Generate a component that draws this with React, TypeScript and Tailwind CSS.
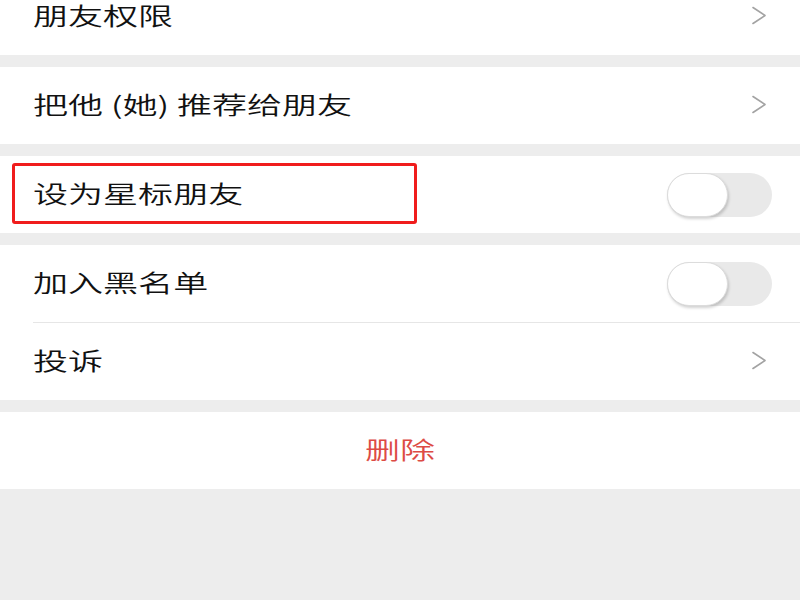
import { ReactNode } from "react";

const font = {
  fontFamily: '"Noto Sans CJK SC", "Noto Sans", sans-serif',
};

function Label({ children }: { children: ReactNode }) {
  return (
    <span className="inline-block origin-left scale-x-[1.46] text-[24px] font-[350] leading-none text-[#111] pb-[3px]">
      {children}
    </span>
  );
}

function Chevron() {
  return (
    <svg width="16" height="19" viewBox="0 0 16 19" fill="none" className="mr-[33px] mb-[2px]">
      <path d="M2 1.5 L14 9.5 L2 17.5" stroke="#a3a3a3" strokeWidth="1.6" strokeLinecap="round" strokeLinejoin="round" />
    </svg>
  );
}

function Toggle() {
  return (
    <div className="mr-[28px] h-[44px] w-[105px] rounded-full bg-[#e9e9e9] flex items-center">
      <div className="h-[44px] w-[61px] rounded-full bg-white border border-[#dcdcdc] shadow-[1px_2px_3px_rgba(0,0,0,0.18)]" />
    </div>
  );
}

function Row({ label, right }: { label: ReactNode; right?: ReactNode }) {
  return (
    <div className="relative h-[77px] bg-white flex items-center justify-between pl-[33px]">
      <Label>{label}</Label>
      {right}
    </div>
  );
}

export default function App() {
  return (
    <div className="w-[800px] h-[600px] overflow-hidden bg-[#ededed]" style={font}>
      <div className="-mt-[22px] flex flex-col gap-[12px]">
        <Row label="朋友权限" right={<Chevron />} />
        <Row label="把他 (她) 推荐给朋友" right={<Chevron />} />
        <div className="relative">
          <Row label="设为星标朋友" right={<Toggle />} />
          <div className="absolute left-[12px] top-[7px] w-[405px] h-[61px] border-[3px] border-[#f01c1c] rounded-[3px]" />
        </div>
        <div className="bg-white">
          <Row label="加入黑名单" right={<Toggle />} />
          <div className="ml-[33px] h-px bg-[#e6e6e6]" />
          <Row label="投诉" right={<Chevron />} />
        </div>
        <div className="h-[77px] bg-white flex items-center justify-center">
          <span className="inline-block scale-x-[1.46] text-[24px] font-[350] leading-none text-[#dd4b45] pb-[3px]">删除</span>
        </div>
      </div>
    </div>
  );
}
